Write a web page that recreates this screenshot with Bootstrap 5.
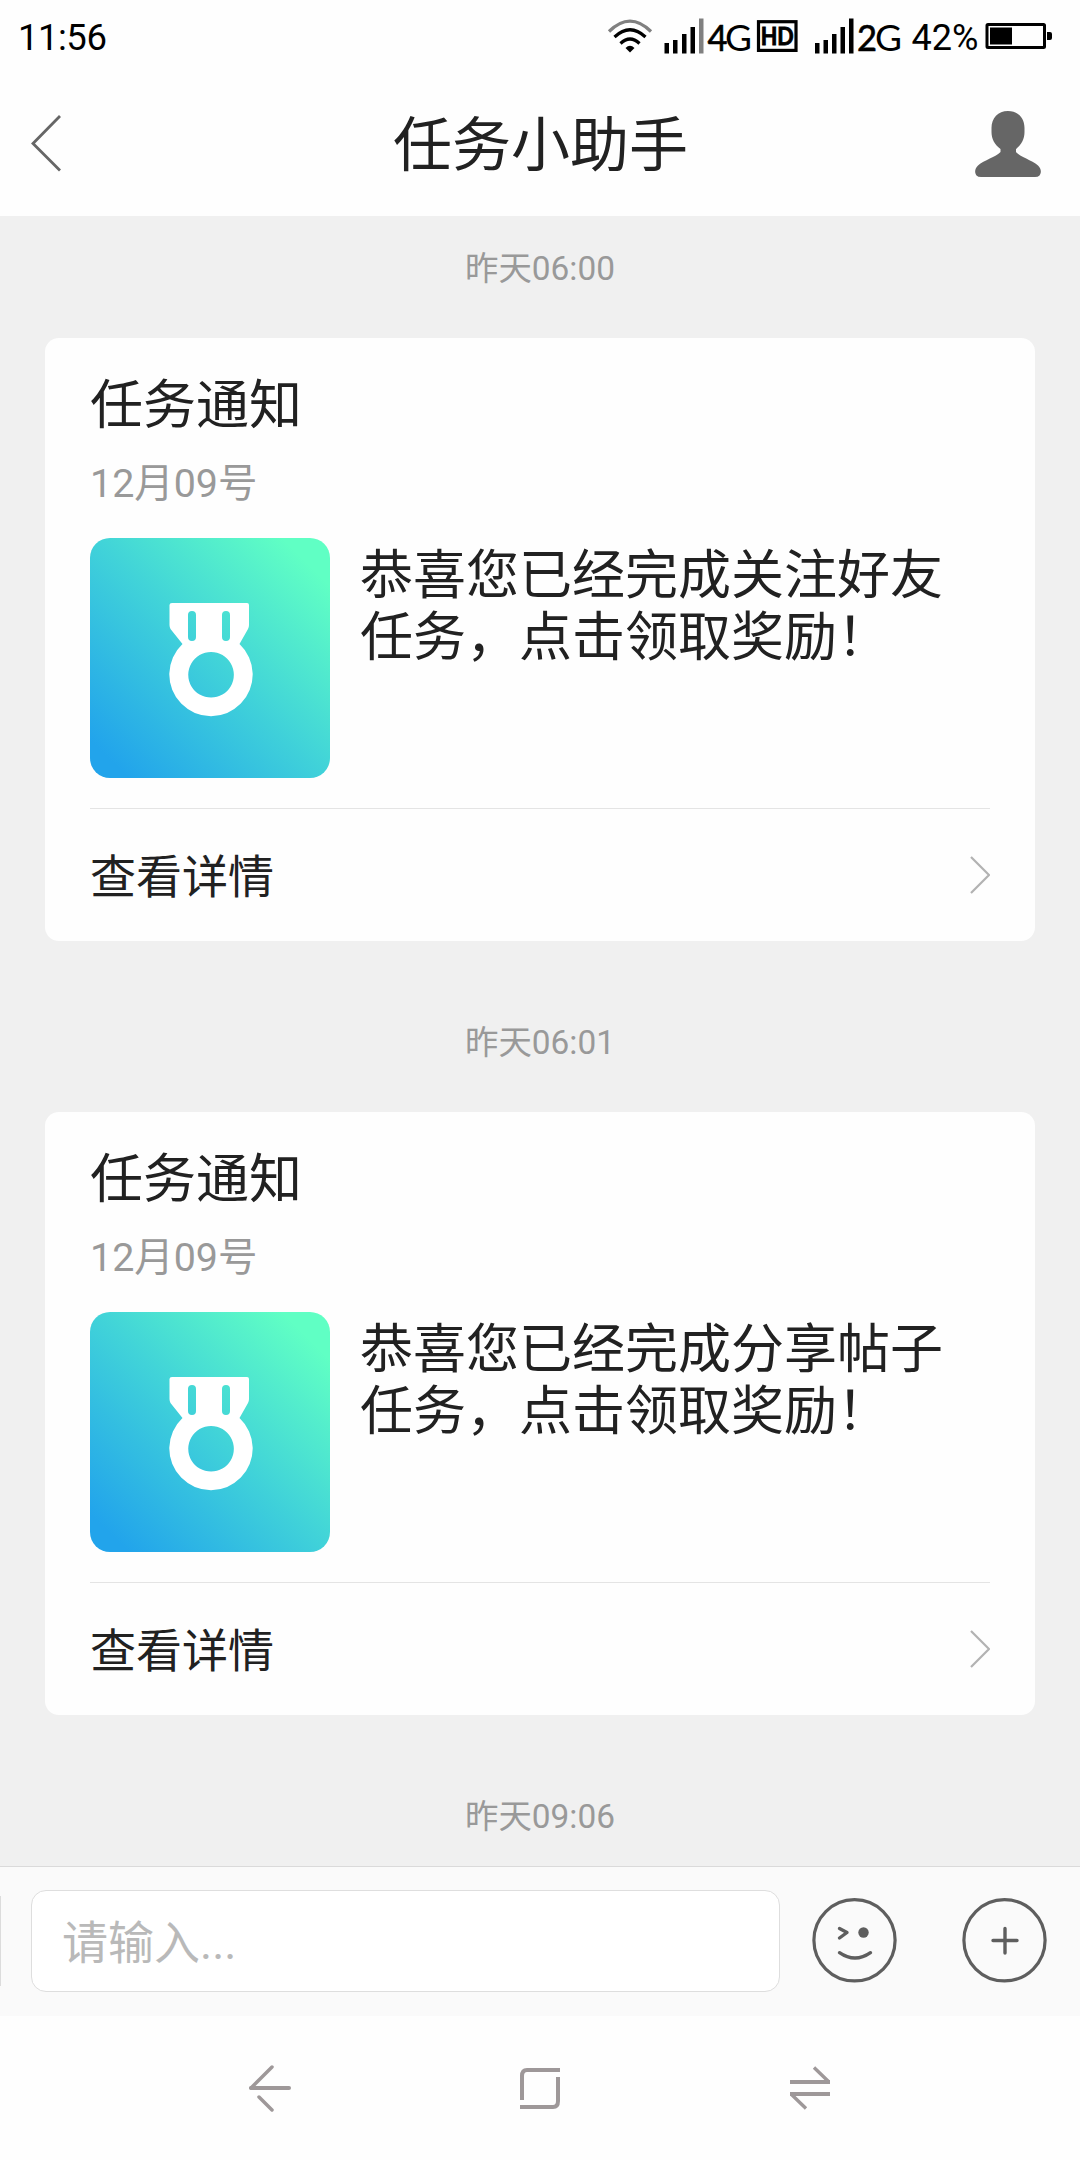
<!DOCTYPE html>
<html lang="zh-CN">
<head>
<meta charset="utf-8">
<meta name="viewport" content="width=device-width, initial-scale=1">
<title>任务小助手</title>
<link href="https://cdn.jsdelivr.net/npm/bootstrap@5.3.0/dist/css/bootstrap.min.css" rel="stylesheet">
<style>
body{font-family:Roboto,"Noto Sans CJK SC",sans-serif;color:#212121;background:#fefefe}
svg{display:block;flex:none}
.phone{width:1080px;height:2160px;overflow:hidden}
.status-row{height:72px;color:#000;padding-left:18px;padding-right:26px}
.clock{font-size:36.5px;line-height:76px;letter-spacing:-.5px}
.title-row{height:144px;padding:0 38px 0 30px}
.title-text{font-size:59px;line-height:144px;margin:0;font-weight:400;padding-top:4px;padding-left:9px}
.chat{background:#f0f0f0;height:1650px;padding:0 45px;overflow:hidden}
.stamp{font-size:33.4px;line-height:40px;height:122px;padding-top:33px;color:#999}
.notice{border:0;border-radius:14px;background:#fefefe;height:603px;margin-bottom:49px;padding:0 45px;color:#212121}
.notice-title{font-size:53px;line-height:64px;padding-top:36px;height:116px;font-weight:400;margin:0}
.notice-date{font-size:39.4px;line-height:48px;height:84px;color:#999;padding-top:6px}
.notice-main{height:271px;gap:30px;border-bottom:1px solid #e4e4e4}
.notice-msg{font-size:53px;line-height:62px;padding-top:7px;white-space:nowrap}
.notice-link{font-size:46px;line-height:60px;height:132px;color:#212121}
.notice-link span{padding-top:3px}
.composer{height:150px;background:#fafafa;border-top:1px solid #dadada;padding-right:33px;padding-bottom:1px}
.edge{width:1px;height:90px;background:#dcdcdc;margin-right:30px}
.field,.field:focus{width:749px;height:102px;border:1px solid #dedede;border-radius:15px;font-size:46px;padding:4px 30px 0;background:#fff;box-shadow:none}
.field::placeholder{color:#b9b9b9;opacity:1}
.sysnav{height:144px;padding:0 249px}
</style>
</head>
<body>
<div class="phone d-flex flex-column">
  <header>
    <div class="status-row d-flex justify-content-between">
      <span class="clock">11:56</span>
      <svg width="450" height="72" viewBox="604 0 450 72" fill="none" font-family="Lato,sans-serif">
        <g stroke="#000" stroke-width="3.2">
          <path stroke="#808080" d="M609 31.500Q630 10.500 651 31.500"/>
          <path d="M614.500 37Q630 22.500 645.500 37"/>
          <path d="M620.500 43.500Q630 34.500 639.500 43.500"/>
        </g>
        <path fill="#000" d="M625.500 48Q630 43.500 634.500 48L630 52.500Z"/>
        <path fill="#000" d="M664.500 43h4.500v10.500h-4.500zM673 40h4.500v13.500h-4.500zM682 34h4.500v19.500h-4.500zM690.500 27h4.500v26.500h-4.500z"/>
        <path fill="#808080" d="M699 18.500h4.500v35h-4.500z"/>
        <g fill="#000" font-size="37.500">
          <text x="707.500" y="51" stroke="#000" stroke-width=".7" textLength="20" lengthAdjust="spacingAndGlyphs">4</text>
          <text x="725" y="51" textLength="27" lengthAdjust="spacingAndGlyphs">G</text>
          <text x="857" y="51" stroke="#000" stroke-width=".7" textLength="20" lengthAdjust="spacingAndGlyphs">2</text>
          <text x="875" y="51" textLength="27" lengthAdjust="spacingAndGlyphs">G</text>
        </g>
        <rect x="758.500" y="21.700" width="37.500" height="28.700" stroke="#000" stroke-width="3.200"/>
        <text x="760.700" y="44.700" font-size="24.500" font-weight="700" fill="#000" stroke="#000" stroke-width=".9" textLength="33" lengthAdjust="spacingAndGlyphs">HD</text>
        <path fill="#000" d="M815 43h4.500v10.500h-4.500zM823.500 40h4.500v13.500h-4.500zM832 34h4.500v19.500h-4.500zM840.500 27h4.500v26.500h-4.500zM849 18.500h4.500v35h-4.500z"/>
        <text x="911.500" y="50" font-size="36.500" fill="#000" font-family="Roboto,sans-serif" textLength="67" lengthAdjust="spacingAndGlyphs">42%</text>
        <rect x="987" y="24.500" width="57.500" height="23" rx="1" stroke="#000" stroke-width="3"/>
        <path fill="#000" d="M990 27.500h22v17h-22zM1047 32h3q2 0 2 2v4q0 2-2 2h-3z"/>
      </svg>
    </div>
    <div class="title-row d-flex justify-content-between align-items-center">
      <svg width="68" height="60" viewBox="30 114 68 60"><path d="M60 116L33 143.500L60 170.500" fill="none" stroke="#666" stroke-width="2.800"/></svg>
      <h1 class="title-text">任务小助手</h1>
      <svg width="68" height="68" viewBox="974 110 68 68"><path fill="#666" d="M1008 111C998 111 991.500 118 991.500 128V132C991.500 139 994.500 144.500 1000.500 149V152C996 157 984 160 978 165.500C974.500 169 974.500 173 976.500 175.500Q978 177 981 177H1035Q1038 177 1039.500 175.500C1041.500 173 1041.500 169 1038 165.500C1032 160 1020 157 1016 152V149C1021.500 144.500 1024.500 139 1024.500 132V128C1024.500 118 1018 111 1008 111Z"/></svg>
    </div>
  </header>

  <main class="chat">
    <div class="stamp text-center">昨天06:00</div>
    <article class="card notice">
      <h2 class="notice-title">任务通知</h2>
      <div class="notice-date">12月09号</div>
      <div class="notice-main d-flex align-items-start">
        <svg width="240" height="240" viewBox="0 0 240 240">
          <defs><linearGradient id="medalFill" x1="0" y1="1" x2="1" y2="0"><stop offset=".08" stop-color="#22a4eb"/><stop offset=".5" stop-color="#40d2d9"/><stop offset=".9" stop-color="#60ffc4"/></linearGradient></defs>
          <rect width="240" height="240" rx="20" fill="url(#medalFill)"/>
          <path fill="#fff" fill-rule="evenodd" d="M82 65H157Q159 65 159 67V87Q159 89 158 91L149.500 106A41.700 41.700 0 1 1 92.500 106L80.500 91Q79.500 89 79.500 87V67Q79.500 65 82 65ZM121 114a22.800 22.800 0 1 0 .1 0ZM98 77V99a4 4 0 0 0 8 0V77a4 4 0 0 0-8 0ZM132 77V99a4 4 0 0 0 8 0V77a4 4 0 0 0-8 0Z"/>
        </svg>
        <div class="notice-msg">恭喜您已经完成关注好友<br>任务，点击领取奖励！</div>
      </div>
      <a href="#" class="notice-link d-flex justify-content-between align-items-center text-decoration-none"><span>查看详情</span>
        <svg width="22" height="40" viewBox="968 855 22 40"><path d="M971 857L989 875L971 893" fill="none" stroke="#b2b2b2" stroke-width="2.200"/></svg></a>
    </article>

    <div class="stamp text-center">昨天06:01</div>
    <article class="card notice">
      <h2 class="notice-title">任务通知</h2>
      <div class="notice-date">12月09号</div>
      <div class="notice-main d-flex align-items-start">
        <svg width="240" height="240" viewBox="0 0 240 240">
          <rect width="240" height="240" rx="20" fill="url(#medalFill)"/>
          <path fill="#fff" fill-rule="evenodd" d="M82 65H157Q159 65 159 67V87Q159 89 158 91L149.500 106A41.700 41.700 0 1 1 92.500 106L80.500 91Q79.500 89 79.500 87V67Q79.500 65 82 65ZM121 114a22.800 22.800 0 1 0 .1 0ZM98 77V99a4 4 0 0 0 8 0V77a4 4 0 0 0-8 0ZM132 77V99a4 4 0 0 0 8 0V77a4 4 0 0 0-8 0Z"/>
        </svg>
        <div class="notice-msg">恭喜您已经完成分享帖子<br>任务，点击领取奖励！</div>
      </div>
      <a href="#" class="notice-link d-flex justify-content-between align-items-center text-decoration-none"><span>查看详情</span>
        <svg width="22" height="40" viewBox="968 855 22 40"><path d="M971 857L989 875L971 893" fill="none" stroke="#b2b2b2" stroke-width="2.200"/></svg></a>
    </article>

    <div class="stamp text-center">昨天09:06</div>
  </main>

  <footer>
    <div class="composer d-flex align-items-center">
      <div class="edge"></div>
      <input class="form-control field flex-shrink-0" type="text" placeholder="请输入...">
      <svg class="ms-auto" width="236" height="88" viewBox="811 1897 236 88" fill="none" stroke="#5e5e5e" stroke-width="3.400" stroke-linecap="round" stroke-linejoin="round">
        <circle cx="854.500" cy="1940.300" r="40.600" stroke-width="3.200"/>
        <path d="M839.500 1928.500L847 1932.500L839.500 1938M839.500 1952.700Q855 1963.500 870.500 1952.700"/>
        <circle cx="863.500" cy="1932.500" r="5.200" fill="#5e5e5e" stroke="none"/>
        <circle cx="1004.500" cy="1940.300" r="40.600" stroke-width="3.200"/>
        <path d="M993 1940.500H1017M1005 1928.500V1953"/>
      </svg>
    </div>
    <nav class="sysnav d-flex justify-content-between align-items-center">
      <svg width="42" height="50" viewBox="249 2063 42 50" fill="none" stroke="#9e9899" stroke-width="4" stroke-linecap="round"><path stroke-width="3.500" d="M272 2067L251 2088M259 2097L272 2110"/><path d="M251 2088H289"/></svg>
      <svg width="42" height="50" viewBox="519 2063 42 50" fill="none" stroke="#9e9899" stroke-width="4"><path d="M522 2100V2076Q522 2070 527 2070H560M558 2077V2101Q558 2107 553 2107H520"/></svg>
      <svg width="42" height="50" viewBox="789 2063 42 50" fill="none" stroke="#9e9899" stroke-width="4"><path d="M790 2082H830M790 2094H830"/><path stroke-width="3.400" d="M814 2067.500L829 2082M791 2094L806 2108.500"/></svg>
    </nav>
  </footer>
</div>
<script src="https://cdn.jsdelivr.net/npm/bootstrap@5.3.0/dist/js/bootstrap.bundle.min.js"></script>
</body>
</html>
